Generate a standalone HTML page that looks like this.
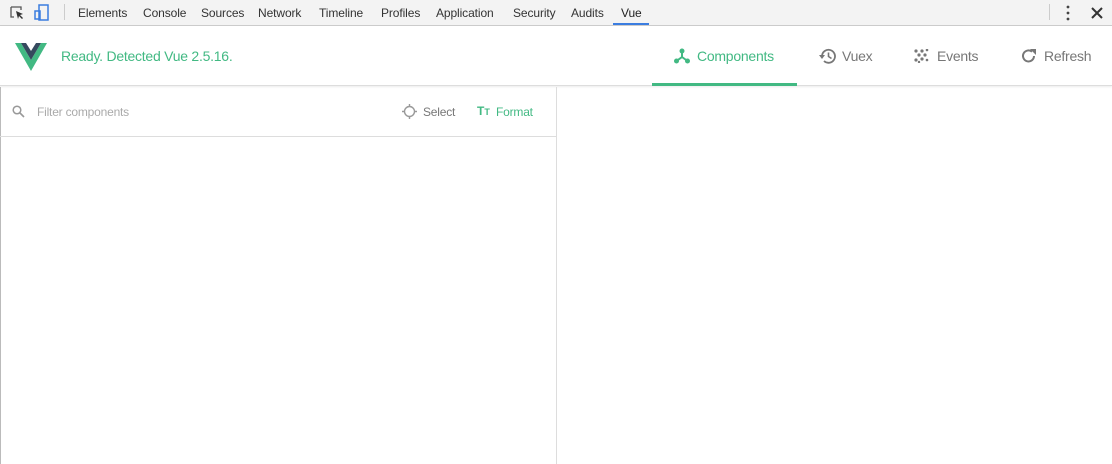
<!DOCTYPE html>
<html><head><style>
*{margin:0;padding:0;box-sizing:border-box}
body{width:1112px;height:464px;overflow:hidden;background:#fff;font-family:"Liberation Sans",sans-serif;position:relative}
.tb{position:absolute;left:0;top:0;width:1112px;height:26px;background:#f3f3f3;border-bottom:1px solid #ccc}
.tb span{position:absolute;top:6px;font-size:12px;color:#333;letter-spacing:-0.1px}
.hd{position:absolute;top:26px;left:0;width:1112px;height:60px;background:#fff;border-bottom:1px solid #ddd;box-shadow:0 1px 2px rgba(0,0,0,.08)}
.t{position:absolute;top:22px;font-size:14px;color:#777;letter-spacing:-0.25px}
.fl{position:absolute;top:87px;left:0;width:557px;height:50px;border-bottom:1px solid #ddd}
</style></head><body>
<div class="tb">
<svg style="position:absolute;left:9px;top:5px" width="16" height="16"><path d="M2 2h10v3M2 2v10h3" fill="none" stroke="#555" stroke-width="1.3"/><path d="M7 6l7 3-3 1 3 3-1 1-3-3-1 3z" fill="#333"/></svg>
<svg style="position:absolute;left:34px;top:4px" width="16" height="17"><rect x="5" y="1" width="9" height="15" fill="none" stroke="#3b7de0" stroke-width="1.5"/><rect x="1" y="7" width="5" height="8" fill="none" stroke="#3b7de0" stroke-width="1.5"/></svg>
<div style="position:absolute;left:64px;top:4px;width:1px;height:16px;background:#ccc"></div>
<span style="left:78px">Elements</span><span style="left:143px">Console</span><span style="left:201px">Sources</span><span style="left:258px">Network</span><span style="left:319px">Timeline</span><span style="left:381px">Profiles</span><span style="left:436px">Application</span><span style="left:513px">Security</span><span style="left:571px">Audits</span><span style="left:621px;color:#222">Vue</span>
<div style="position:absolute;left:613px;top:23px;width:36px;height:2px;background:#3b7de0"></div>
<div style="position:absolute;left:1049px;top:4px;width:1px;height:16px;background:#ccc"></div>
<svg style="position:absolute;left:1065px;top:5px" width="6" height="16"><circle cx="3" cy="2" r="1.4" fill="#444"/><circle cx="3" cy="8" r="1.4" fill="#444"/><circle cx="3" cy="14" r="1.4" fill="#444"/></svg>
<svg style="position:absolute;left:1091px;top:7px" width="12" height="12"><path d="M1 1l10 10M11 1L1 11" stroke="#333" stroke-width="2"/></svg>
</div>
<div class="hd">
<svg style="position:absolute;left:15px;top:17px" width="32" height="28" viewBox="0 0 32 28"><path d="M0 0h6l10 17L26 0h6L16 28z" fill="#42b983"/><path d="M6 0h5l5 8 5-8h5L16 17z" fill="#35495e"/></svg>
<div class="t" style="left:61px;color:#42b983">Ready. Detected Vue 2.5.16.</div>
<svg style="position:absolute;left:674px;top:22px" width="16" height="16"><circle cx="8" cy="3" r="2.5" fill="#42b983"/><circle cx="2.5" cy="13" r="2.5" fill="#42b983"/><circle cx="13.5" cy="13" r="2.5" fill="#42b983"/><path d="M8 3v6L2.5 13M8 9l5.5 4" stroke="#42b983" stroke-width="2" fill="none"/></svg>
<div class="t" style="left:697px;color:#42b983">Components</div>
<div style="position:absolute;left:652px;top:57px;width:145px;height:3px;background:#42b983"></div>
<svg style="position:absolute;left:818px;top:22px" width="18" height="16"><path d="M4 8a6.5 6.5 0 1 1 2 5" fill="none" stroke="#777" stroke-width="1.8"/><path d="M1 7h6l-3 4z" fill="#777"/><path d="M10.5 4.5v4l3 2" fill="none" stroke="#777" stroke-width="1.6"/></svg>
<div class="t" style="left:842px">Vuex</div>
<svg style="position:absolute;left:914px;top:23px" width="16" height="14" fill="#777"><circle cx="2" cy="2" r="1.6"/><circle cx="8" cy="2" r="1.6"/><circle cx="13" cy="1" r="1.3"/><circle cx="5" cy="6" r="1.6"/><circle cx="11" cy="6" r="1.6"/><circle cx="2" cy="11" r="1.6"/><circle cx="8" cy="10" r="1.6"/><circle cx="13" cy="11" r="1.3"/><circle cx="5" cy="13" r="1.2"/></svg>
<div class="t" style="left:937px">Events</div>
<svg style="position:absolute;left:1021px;top:22px" width="16" height="16"><path d="M13 8a5.5 5.5 0 1 1-2-4.3" fill="none" stroke="#777" stroke-width="2"/><path d="M9 1h6v6z" fill="#777"/></svg>
<div class="t" style="left:1044px">Refresh</div>
</div>
<div style="position:absolute;left:0;top:87px;width:1px;height:377px;background:#bbb"></div>
<div style="position:absolute;left:556px;top:87px;width:1px;height:377px;background:#ddd"></div>
<div class="fl">
<svg style="position:absolute;left:12px;top:18px" width="13" height="13"><circle cx="5" cy="5" r="3.8" fill="none" stroke="#999" stroke-width="1.5"/><path d="M8 8l4 4" stroke="#999" stroke-width="1.6"/></svg>
<div style="position:absolute;left:37px;top:18px;font-size:12px;color:#aaa;letter-spacing:-0.2px">Filter components</div>
<svg style="position:absolute;left:402px;top:17px" width="15" height="15"><circle cx="7.5" cy="7.5" r="5" fill="none" stroke="#999" stroke-width="1.4"/><path d="M7.5 0v3M7.5 12v3M0 7.5h3M12 7.5h3" stroke="#999" stroke-width="1.4"/></svg>
<div style="position:absolute;left:423px;top:18px;font-size:12px;color:#777;letter-spacing:-0.2px">Select</div>
<div style="position:absolute;left:477px;top:17px;font-size:12px;font-weight:bold;color:#42b983">T<span style="font-size:9px">T</span></div>
<div style="position:absolute;left:496px;top:18px;font-size:12px;color:#42b983;letter-spacing:-0.2px">Format</div>
</div>
</body></html>
